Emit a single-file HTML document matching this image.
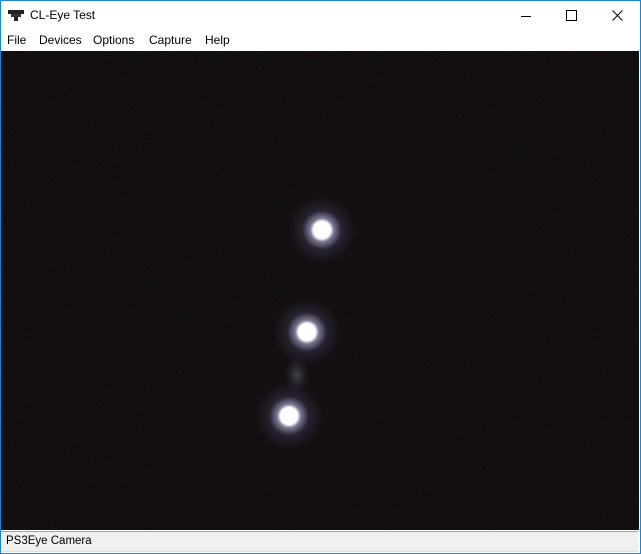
<!DOCTYPE html>
<html><head><meta charset="utf-8"><style>
body{margin:0;width:641px;height:554px;overflow:hidden;background:#fff;font-family:"Segoe UI","Liberation Sans",sans-serif;position:relative}
#border{position:absolute;left:0;top:0;width:639px;height:552px;border:1px solid #1883d7;}
#title{position:absolute;left:1px;top:1px;width:639px;height:30px;background:#fff}
#title .t{position:absolute;left:29px;top:7px;font-size:12px;color:#000}
#menu{position:absolute;left:1px;top:31px;width:639px;height:20px;background:#fff;font-size:12px}
#menu span{position:absolute;top:2px}
#cam{position:absolute;left:1px;top:51px;width:638px;height:479px;background:#0a0606;overflow:hidden}
#status{position:absolute;left:1px;top:531px;width:637px;height:19px;background:#f0f0f0;border-top:1px solid #a0a0a0;border-bottom:1px solid #e0e0e0;font-family:"Liberation Sans",sans-serif;font-size:11.5px}
.spot{position:absolute;border-radius:50%}
</style></head><body>
<div id="border"></div>
<div id="title">
<svg style="position:absolute;left:7px;top:9px" width="16" height="12" viewBox="0 0 16 12"><rect x="0" y="0" width="16" height="4" fill="#222"/><rect x="3" y="4" width="10" height="3" fill="#333"/><rect x="6" y="7" width="4" height="4" fill="#222"/></svg>
<div class="t">CL-Eye Test</div>
<svg style="position:absolute;left:520px;top:10px" width="10" height="10"><line x1="0" y1="5.5" x2="10" y2="5.5" stroke="#000"/></svg>
<svg style="position:absolute;left:565px;top:9px" width="11" height="11"><rect x="0.5" y="0.5" width="10" height="10" fill="none" stroke="#000"/></svg>
<svg style="position:absolute;left:611px;top:9px" width="11" height="11"><path d="M0.5 0.5L10.5 10.5M10.5 0.5L0.5 10.5" stroke="#000"/></svg>
</div>
<div id="menu"><span style="left:6px">File</span><span style="left:38px">Devices</span><span style="left:92px">Options</span><span style="left:148px">Capture</span><span style="left:204px">Help</span></div>
<div id="cam">
<svg width="638" height="479" style="position:absolute;left:0;top:0;opacity:0.12"><filter id="n"><feTurbulence type="fractalNoise" baseFrequency="0.9" numOctaves="1" seed="3"/><feColorMatrix type="matrix" values="0.5 0 0 0 -0.15  0 0.4 0 0 -0.12  0 0 0.5 0 -0.12  0 0 0 0 1"/></filter><rect width="638" height="479" filter="url(#n)"/></svg>
<div class="spot" style="left:281px;top:139px;width:80px;height:80px;background:radial-gradient(circle,#fff 0,#fff 15%,rgba(210,205,255,.55) 21%,rgba(120,110,170,.2) 35%,rgba(60,50,90,0) 60%)"></div>
<div class="spot" style="left:266px;top:241px;width:80px;height:80px;background:radial-gradient(circle,#fff 0,#fff 15%,rgba(210,205,255,.55) 21%,rgba(120,110,170,.2) 35%,rgba(60,50,90,0) 60%)"></div>
<div class="spot" style="left:248px;top:325px;width:80px;height:80px;background:radial-gradient(circle,#fff 0,#fff 15%,rgba(210,205,255,.55) 21%,rgba(120,110,170,.2) 35%,rgba(60,50,90,0) 60%)"></div>
<div class="spot" style="left:283px;top:306px;width:26px;height:36px;background:radial-gradient(ellipse,rgba(140,140,150,.4) 0,rgba(80,80,100,.18) 45%,rgba(0,0,0,0) 70%)"></div>
</div>
<div id="status"><span style="position:absolute;left:5px;top:3px">PS3Eye Camera</span></div>
</body></html>
